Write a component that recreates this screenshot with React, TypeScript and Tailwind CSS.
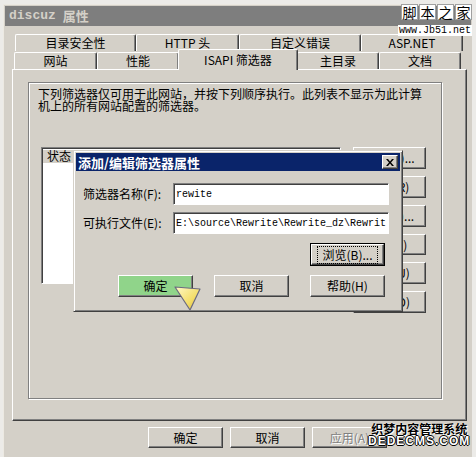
import type { ReactNode } from "react";

const FONT = "font-['SimSun','Noto_Sans_CJK_SC',sans-serif]";
const MONO = "font-['Liberation_Mono','Noto_Sans_CJK_SC',monospace]";

// Win2k raised button bevel
const RAISED =
  "border border-t-white border-l-white border-r-[#404040] border-b-[#404040] shadow-[inset_-1px_-1px_0_#808080]";

function Btn({
  children,
  className = "",
  disabled = false,
}: {
  children: ReactNode;
  className?: string;
  disabled?: boolean;
}) {
  return (
    <div
      className={`flex items-center justify-center text-[12px] leading-none ${RAISED} ${
        disabled ? "text-[#808080] [text-shadow:1px_1px_0_#fff]" : "text-black"
      } ${className}`}
    >
      {children}
    </div>
  );
}

function Tab({ label, w, active = false }: { label: string; w: string; active?: boolean }) {
  return (
    <div
      className={`flex items-center justify-center border-t border-l border-t-white border-l-white border-r border-r-[#404040] shadow-[inset_-1px_0_0_#808080] rounded-t-[2px] text-[12px] text-black ${w} ${
        active ? "h-[21px] -mt-[3px] -mx-[1px] relative z-10 bg-[#d4d0c8] -mb-[1px]" : "h-[17px]"
      }`}
    >
      {label}
    </div>
  );
}

function Field({ label, value }: { label: string; value: string }) {
  return (
    <div className="flex items-center h-[22px]">
      <div className="w-[90px] text-[12px] text-black whitespace-nowrap">{label}</div>
      <div className="w-[216px] h-[22px] bg-white border border-t-[#808080] border-l-[#808080] border-r-white border-b-white shadow-[inset_1px_1px_0_#404040] flex items-center pl-[2px]">
        <span className={`${MONO} text-[10px] text-black whitespace-nowrap`}>{value}</span>
      </div>
    </div>
  );
}

export default function App() {
  return (
    <div className={`${FONT} w-[476px] h-[457px] bg-[#ecebe8] pt-[4px] pl-[3px] pr-[4px] overflow-hidden relative`}>
      {/* property sheet window */}
      <div className="h-[453px] bg-[#d4d0c8] border-l border-t border-l-[#ece9e2] border-t-[#ece9e2] flex flex-col">
        {/* title bar */}
        <div className="h-[20px] mx-[1px] mt-[1px] bg-[#7e7e7e] flex items-center pl-[4px]">
          <span className={`${MONO} font-bold text-[13px] text-[#d4d0c8]`}>discuz</span>
          <span className="ml-[7px] font-bold text-[13px] text-[#d4d0c8]">属性</span>
        </div>

        {/* tabs */}
        <div className="flex flex-col pl-[8px] pr-[5px] mt-[8px]">
          <div className="flex pl-[3px]">
            <Tab label="目录安全性" w="w-[121px]" />
            <Tab label="HTTP 头" w="w-[103px]" />
            <Tab label="自定义错误" w="w-[122px]" />
            <Tab label="ASP.NET" w="w-[102px]" />
          </div>
          <div className="flex pl-[2px] h-[18px] items-end">
            <Tab label="网站" w="w-[83px]" />
            <Tab label="性能" w="w-[82px]" />
            <Tab label="ISAPI 筛选器" w="w-[120px]" active />
            <Tab label="主目录" w="w-[82px]" />
            <Tab label="文档" w="w-[82px]" />
          </div>

          {/* tab page */}
          <div className="h-[352px] border border-t-white border-l-white border-r-[#404040] border-b-[#404040] shadow-[inset_-1px_-1px_0_#808080] pt-[12px] pl-[15px] pr-[24px]">
            <div className="h-[317px] border border-[#808080] shadow-[1px_1px_0_#fff,inset_1px_1px_0_#fff] pt-[5px] pl-[9px]">
              <p className="text-[12px] leading-[12px] text-black w-[388px]">
                下列筛选器仅可用于此网站，并按下列顺序执行。此列表不显示为此计算机上的所有网站配置的筛选器。
              </p>

              <div className="flex mt-[35px] pl-[3px]">
                {/* filter list */}
                <div className="w-[300px] h-[137px] border border-t-[#808080] border-l-[#808080] border-r-white border-b-white shadow-[inset_1px_1px_0_#404040] bg-white flex flex-col">
                  <div className="h-[14px] bg-[#d4d0c8] mt-[1px] ml-[1px] flex">
                    <div className="w-[300px] border-r border-r-[#808080] border-t border-t-white pl-[4px] text-[12px] leading-[12px] text-black">
                      状态
                    </div>
                  </div>
                </div>

                {/* side buttons (under the dialog) */}
                <div className="ml-[12px] flex flex-col gap-[7px]">
                  <Btn className="w-[73px] h-[22px]">添加(D)...</Btn>
                  <Btn className="w-[73px] h-[22px]">删除(R)</Btn>
                  <Btn className="w-[73px] h-[22px]">编辑(E)...</Btn>
                  <Btn className="w-[73px] h-[21px]">禁用(I)</Btn>
                  <Btn className="w-[73px] h-[22px]">上移(U)</Btn>
                  <Btn className="w-[73px] h-[22px]">下移(O)</Btn>
                </div>
              </div>
            </div>
          </div>
        </div>

        {/* OK / Cancel / Apply */}
        <div className="flex gap-[7px] pl-[144px] mt-[6px]">
          <Btn className="w-[75px] h-[21px]">确定</Btn>
          <Btn className="w-[75px] h-[21px]">取消</Btn>
          <Btn className="w-[75px] h-[21px]" disabled>
            应用(A)
          </Btn>
        </div>
      </div>

      {/* jb51 logo */}
      <div className="absolute left-[398px] top-[4px] flex flex-col items-end">
        <div className="flex gap-[1px]">
          {["脚", "本", "之", "家"].map((c) => (
            <div
              key={c}
              className="w-[17px] h-[16px] bg-white border border-[#a0a0a0] flex items-center justify-center text-[14px] leading-none text-black"
            >
              {c}
            </div>
          ))}
        </div>
        <div className={`${MONO} mt-[5px] bg-white text-[10px] leading-[11px] px-[1px] text-black`}>www.Jb51.net</div>
      </div>

      {/* add/edit filter dialog */}
      <div className="absolute left-[73px] top-[150px] w-[330px] h-[162px] bg-[#d4d0c8] border border-t-[#d4d0c8] border-l-[#d4d0c8] border-r-[#404040] border-b-[#404040] shadow-[inset_1px_1px_0_#fff,inset_-1px_-1px_0_#808080] p-[2px] flex flex-col">
        <div className="h-[18px] bg-[#0a246a] flex items-center justify-between pl-[2px] pr-[2px]">
          <span className="text-white font-bold text-[13px] leading-none">添加/编辑筛选器属性</span>
          <div className={`w-[16px] h-[14px] bg-[#d4d0c8] ${RAISED} flex items-center justify-center`}>
            <svg width="8" height="7" viewBox="0 0 8 7">
              <path d="M0 0h2l2 2.5L6 0h2L5 3.5 8 7H6L4 4.5 2 7H0l3-3.5z" fill="#000" />
            </svg>
          </div>
        </div>

        <div className="flex flex-col pl-[7px] pt-[12px] gap-[7px]">
          <Field label="筛选器名称(F):" value="rewite" />
          <Field label="可执行文件(E):" value="E:\source\Rewrite\Rewrite_dz\Rewrit" />
        </div>

        <div className="flex justify-end pr-[15px] mt-[9px]">
          <div className="w-[75px] h-[23px] border border-black">
            <Btn className="w-full h-full">
              <span className="outline outline-1 outline-dotted outline-black px-[4px] py-[2px]">浏览(B)...</span>
            </Btn>
          </div>
        </div>

        <div className="flex gap-[21px] pl-[42px] mt-[9px]">
          <Btn className="w-[75px] h-[22px] !bg-[#90d48a]">确定</Btn>
          <Btn className="w-[75px] h-[22px]">取消</Btn>
          <Btn className="w-[75px] h-[22px]">帮助(H)</Btn>
        </div>
      </div>

      {/* highlight pointer */}
      <svg className="absolute left-[173px] top-[284px]" width="30" height="28" viewBox="0 0 30 28">
        <defs>
          <linearGradient id="ptr" x1="0" y1="0" x2="1" y2="1">
            <stop offset="0%" stopColor="#fff9c8" />
            <stop offset="60%" stopColor="#f4de6a" />
            <stop offset="100%" stopColor="#d8b830" />
          </linearGradient>
        </defs>
        <polygon points="2,3 27,5 17,26" fill="url(#ptr)" stroke="#6b6a80" strokeWidth="1.2" strokeLinejoin="round" />
      </svg>

      {/* dedecms watermark */}
      <div className="absolute left-[368px] top-[423px] flex flex-col items-center leading-none">
        <span className="text-[12px] font-bold text-black [text-shadow:0_0_1px_#fff,1px_1px_0_#fff]">织梦内容管理系统</span>
        <span className="font-['Liberation_Sans',sans-serif] font-bold text-[12px] tracking-[1px] text-white [text-shadow:1px_0_0_#000,-1px_0_0_#000,0_1px_0_#000,0_-1px_0_#000]">
          DEDECMS.COM
        </span>
      </div>
    </div>
  );
}
